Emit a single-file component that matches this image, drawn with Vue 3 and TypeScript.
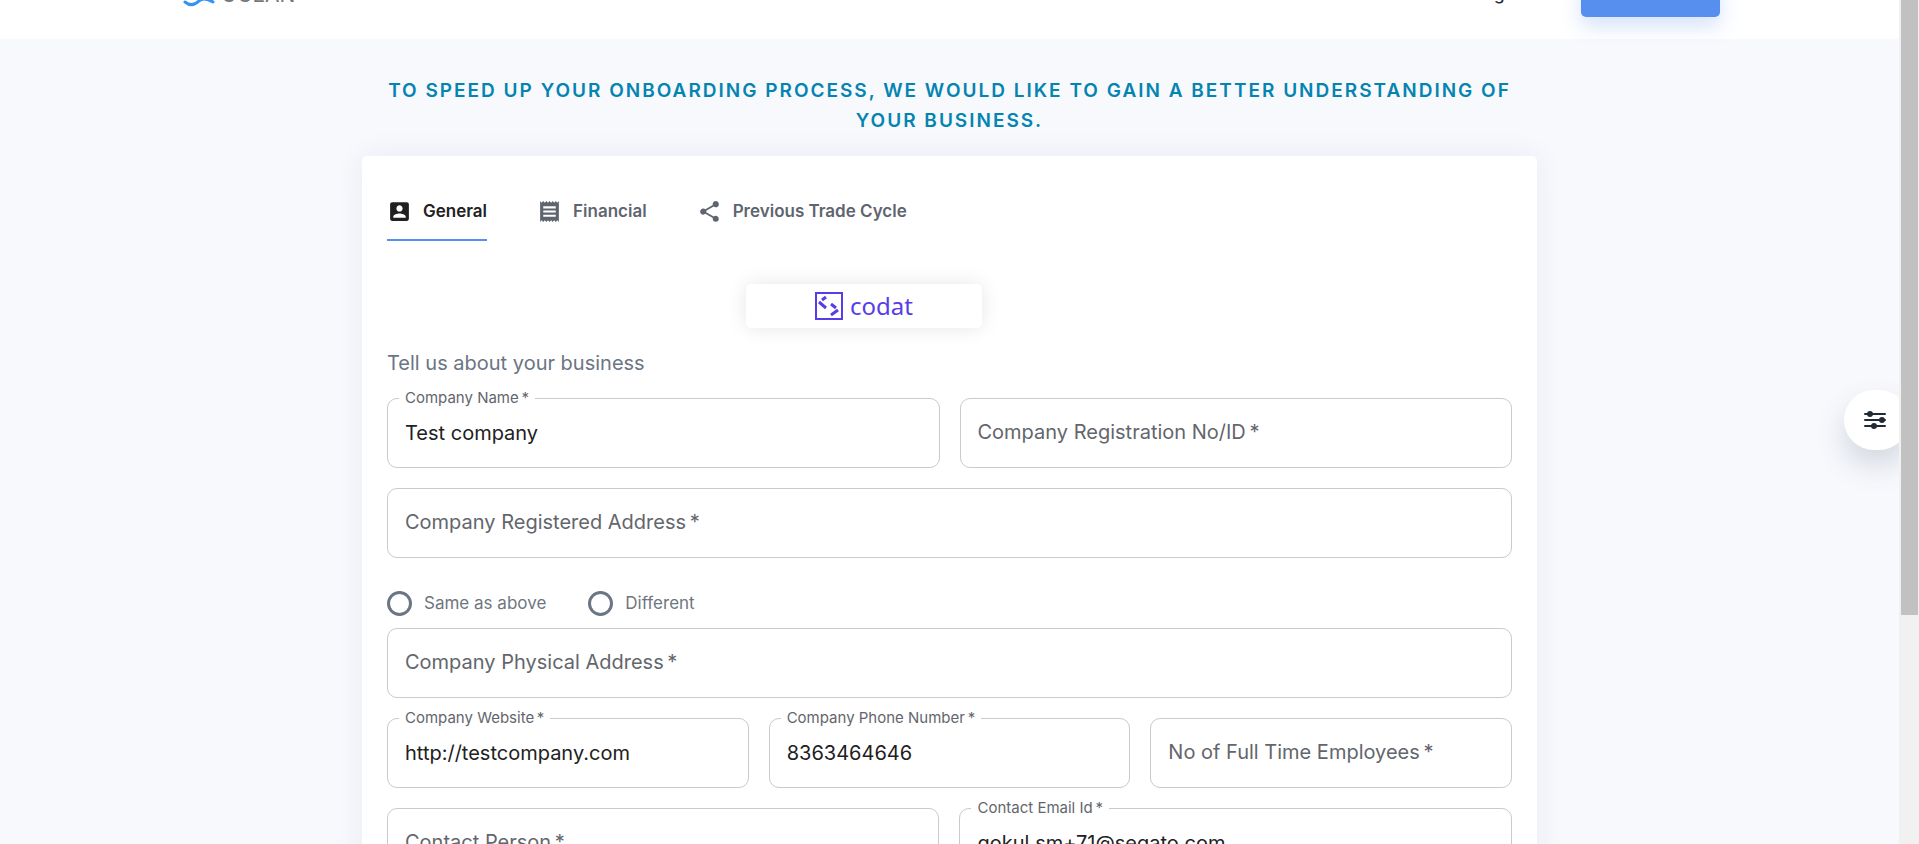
<script setup lang="ts">
import { reactive, ref } from 'vue'

interface Field { id: string; label: string; type: string; span: number }

const tab = ref('General')
const values = reactive<Record<string, string>>({
  name: 'Test company',
  registration: '',
  registered: '',
  physical: '',
  website: 'http://testcompany.com',
  phone: '8363464646',
  employees: '',
  person: '',
  email: 'gokul.sm+71@seqato.com',
})
const addressMode = ref('')

const upper: Field[] = [
  { id: 'name', label: 'Company Name', type: 'text', span: 3 },
  { id: 'registration', label: 'Company Registration No/ID', type: 'text', span: 3 },
  { id: 'registered', label: 'Company Registered Address', type: 'text', span: 6 },
]
const lower: Field[] = [
  { id: 'physical', label: 'Company Physical Address', type: 'text', span: 6 },
  { id: 'website', label: 'Company Website', type: 'text', span: 2 },
  { id: 'phone', label: 'Company Phone Number', type: 'tel', span: 2 },
  { id: 'employees', label: 'No of Full Time Employees', type: 'text', span: 2 },
  { id: 'person', label: 'Contact Person', type: 'text', span: 3 },
  { id: 'email', label: 'Contact Email Id', type: 'text', span: 3 },
]
const groups = [upper, lower]
const tabs = [
  { name: 'General', icon: 'M19 3H5c-1.1 0-2 .9-2 2v14c0 1.1.9 2 2 2h14c1.1 0 2-.9 2-2V5c0-1.1-.9-2-2-2zm-7 3c1.66 0 3 1.34 3 3s-1.34 3-3 3-3-1.34-3-3 1.34-3 3-3zm6 12H6v-1c0-2 4-3.1 6-3.1s6 1.1 6 3.1v1z' },
  { name: 'Financial', icon: 'M18 17H6v-2h12v2zm0-4H6v-2h12v2zm0-4H6V7h12v2zM3 22l1.5-1.5L6 22l1.5-1.5L9 22l1.5-1.5L12 22l1.5-1.5L15 22l1.5-1.5L18 22l1.5-1.5L21 22V2l-1.5 1.5L18 2l-1.5 1.5L15 2l-1.5 1.5L12 2l-1.5 1.5L9 2 7.5 3.5 6 2 4.5 3.5 3 2v20z' },
  { name: 'Previous Trade Cycle', icon: 'M18 16.08c-.76 0-1.44.3-1.96.77L8.91 12.7c.05-.23.09-.46.09-.7s-.04-.47-.09-.7l7.05-4.11c.54.5 1.25.81 2.04.81 1.66 0 3-1.34 3-3s-1.34-3-3-3-3 1.34-3 3c0 .24.04.47.09.7L8.04 9.81C7.5 9.31 6.79 9 6 9c-1.66 0-3 1.34-3 3s1.34 3 3 3c.79 0 1.5-.31 2.04-.81l7.12 4.16c-.05.21-.08.43-.08.65 0 1.61 1.31 2.92 2.92 2.92s2.92-1.31 2.92-2.92-1.31-2.92-2.92-2.92z' },
]
</script>

<template>
  <div class="page">
    <div class="content">
      <header class="bar">
        <a class="brand" href="#">
          <svg width="34" height="26" viewBox="0 0 34 26" fill="none" stroke="#3392f5" stroke-width="3" stroke-linecap="round">
            <path d="M3 21C8 25 13 24 17 20S26 18 31 21" />
            <path d="M3 8C8 12 13 12 17 8S26 6 31 8" />
          </svg>
          <span>OCEAN</span>
        </a>
        <nav class="nav">
          <a href="#">Home</a>
          <a href="#">Solutions</a>
          <a href="#">Resources</a>
          <a href="#">Login</a>
        </nav>
        <button class="cta" type="button">Get started</button>
      </header>

      <main class="main">
        <h1 class="heading">To speed up your onboarding process, we would like to gain a better understanding of your business.</h1>
        <section class="card">
          <div class="tabs" role="tablist">
            <button
              v-for="t in tabs" :key="t.name" type="button" role="tab"
              class="tab" :class="{ active: tab === t.name }" :aria-selected="tab === t.name" @click="tab = t.name"
            >
              <svg width="25" height="25" viewBox="0 0 24 24" fill="currentColor"><path :d="t.icon" /></svg>
              {{ t.name }}
            </button>
          </div>

          <button class="codat" type="button">
            <svg width="28" height="28" viewBox="0 0 28 28" fill="none" stroke="#573de8" stroke-width="2">
              <rect x="1" y="1" width="26" height="26" />
              <path d="M11 5 7 8M4 10 11 16M16 12 21 16M23 18 16 23" stroke-width="3" />
            </svg>
            <span>codat</span>
          </button>

          <h2 class="lead">Tell us about your business</h2>

          <form class="form" @submit.prevent>
            <template v-for="(group, g) in groups" :key="g">
              <div v-if="g === 1" class="radios" role="radiogroup" aria-label="Physical address">
                <label class="radio"><input v-model="addressMode" type="radio" name="address" value="same">Same as above</label>
                <label class="radio"><input v-model="addressMode" type="radio" name="address" value="different">Different</label>
              </div>
              <div class="grid">
                <div v-for="f in group" :key="f.id" class="field" :class="['span' + f.span, { filled: values[f.id] }]">
                  <input :id="f.id" v-model="values[f.id]" :type="f.type">
                  <label :for="f.id">{{ f.label }}&thinsp;*</label>
                </div>
              </div>
            </template>
          </form>
        </section>
      </main>

      <button class="settings" type="button" aria-label="Settings">
        <svg width="22" height="22" viewBox="0 0 22 22" fill="#212b36" stroke="#212b36" stroke-width="2" stroke-linecap="round">
          <path d="M1 5H21M1 11H21M1 17H21" />
          <circle cx="6" cy="5" r="2" /><circle cx="18" cy="11" r="2" /><circle cx="10" cy="17" r="2" />
        </svg>
      </button>
    </div>
    <div class="scrollbar"><div class="thumb"></div></div>
  </div>
</template>

<style>
body { margin: 0; overflow: hidden; }
</style>

<style scoped>
.page {
  display: flex;
  height: 100vh;
  overflow: hidden;
  background: #f8f9fd;
  color: #212121;
  font-family: Inter, "Liberation Sans", sans-serif;
}
.page * { box-sizing: border-box; }
button, input { font: inherit; }
button { border: 0; cursor: pointer; }
.content { position: relative; flex: 1; min-width: 0; height: 100%; overflow: hidden; }
.bar {
  display: flex;
  align-items: center;
  height: 90px;
  margin-top: -51px;
  padding: 0 179px 0 182px;
  background: #fff;
}
.brand { display: flex; align-items: center; gap: 5px; color: #777; font-size: 21px; text-decoration: none; }
.nav { display: flex; gap: 57px; margin-left: auto; margin-right: 62px; }
.nav a { color: #212b36; font-size: 17px; font-weight: 500; text-decoration: none; }
.cta {
  width: 139px;
  height: 46px;
  padding: 0;
  border-radius: 5px;
  background: #578fee;
  color: #fff;
  font-size: 17px;
  font-weight: 600;
  box-shadow: 0 10px 20px rgba(87, 143, 238, 0.24);
}
.main { max-width: 1175px; margin: 0 auto; padding-top: 37px; }
.heading {
  margin: 0 0 20px;
  padding: 0 20px;
  color: #0484b0;
  font-size: 19px;
  font-weight: 600;
  line-height: 30px;
  letter-spacing: 2px;
  text-align: center;
  text-transform: uppercase;
}
.card {
  display: flex;
  flex-direction: column;
  padding: 25px;
  border-radius: 5px;
  background: #fff;
  box-shadow: 0 0 30px rgba(30, 40, 80, 0.07);
}
.tabs { display: flex; gap: 50px; height: 60px; }
.tab {
  display: flex;
  align-items: center;
  gap: 11px;
  padding: 2px 0 0;
  border-bottom: 2px solid transparent;
  background: none;
  color: #5f6570;
  font-size: 17px;
  font-weight: 600;
}
.tab.active { border-color: #578fee; color: #212121; }
.codat {
  display: flex;
  align-items: center;
  justify-content: center;
  gap: 7px;
  width: 236px;
  height: 44px;
  margin: 43px 0 0 359px;
  padding: 0;
  border-radius: 5px;
  background: #fff;
  color: #573de8;
  box-shadow: 0 0 20px rgba(0, 0, 0, 0.1);
  font-family: "Noto Sans", sans-serif;
  font-size: 24px;
  line-height: 28px;
}
.lead { margin: 20px 0; color: #6b7583; font-size: 20px; font-weight: 400; line-height: 30px; }
.grid { display: grid; grid-template-columns: repeat(6, minmax(0, 1fr)); gap: 20px; }
.span2 { grid-column: span 2; }
.span3 { grid-column: span 3; }
.span6 { grid-column: span 6; }
.field { position: relative; height: 70px; }
.field input {
  width: 100%;
  height: 100%;
  padding: 0 17px;
  border: 1px solid #c9cacc;
  border-radius: 10px;
  outline: 0;
  background: #fff;
  color: #212121;
  font-size: 20px;
}
.field label {
  position: absolute;
  top: 20px;
  left: 12px;
  padding: 0 6px;
  background: #fff;
  color: #63666c;
  font-size: 20px;
  line-height: 28px;
  pointer-events: none;
}
.filled label, .field:focus-within label { top: -9px; font-size: 15px; line-height: 18px; }
.radios { display: flex; gap: 42px; height: 70px; padding-top: 20px; }
.radio { display: flex; align-items: center; gap: 12px; height: 50px; color: #6e7680; font-size: 17px; }
.radio input {
  appearance: none;
  width: 25px;
  height: 25px;
  margin: 0;
  border: 3px solid #6b7583;
  border-radius: 50%;
}
.radio input:checked { background: radial-gradient(#578fee 45%, transparent 50%); border-color: #578fee; }
.settings {
  position: absolute;
  top: 390px;
  right: -10px;
  width: 65px;
  height: 60px;
  padding: 0 0 0 20px;
  border-radius: 30px;
  background: #fff;
  text-align: left;
  line-height: 0;
  box-shadow: 0 15px 30px rgba(60, 80, 100, 0.2);
}
.scrollbar { width: 20px; height: 100%; padding: 0 1px 0 2px; background: #f1f1f1; }
.thumb { height: 615px; background: #c1c1c1; }
</style>
